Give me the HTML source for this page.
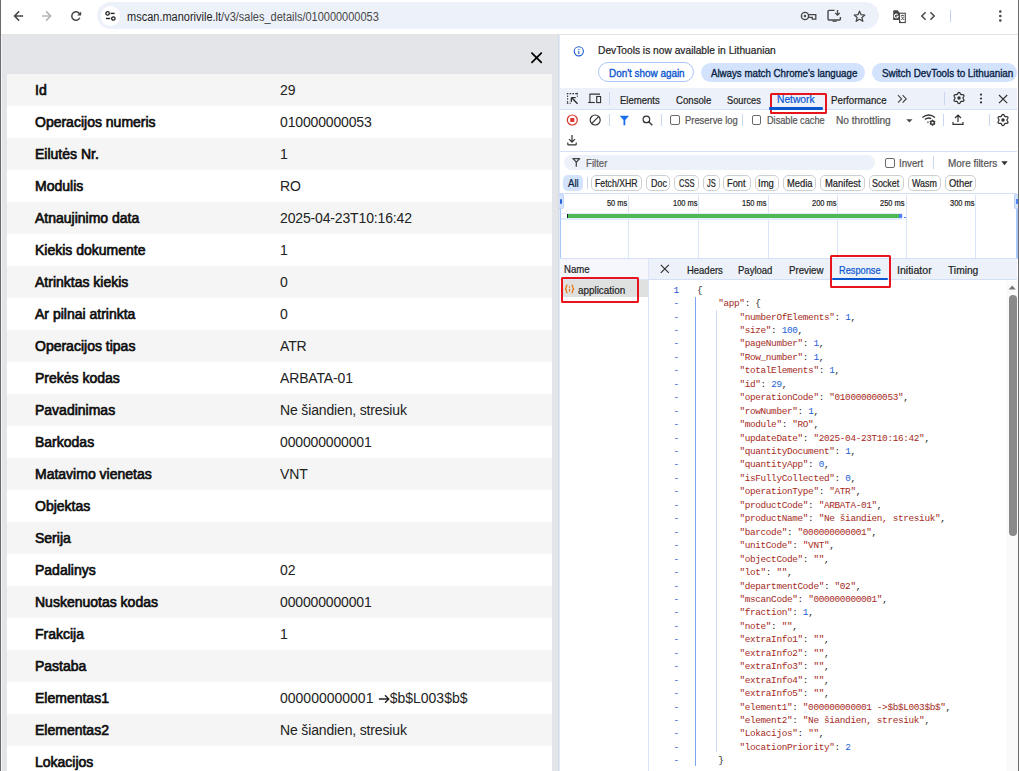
<!DOCTYPE html>
<html><head><meta charset="utf-8"><style>
*{margin:0;padding:0;box-sizing:border-box}
html,body{width:1019px;height:771px;overflow:hidden;background:#fff;font-family:"Liberation Sans",sans-serif;position:relative}
.a{position:absolute}
.t{position:absolute;white-space:nowrap;line-height:1}
.s{position:absolute;overflow:visible}
.row{position:absolute;left:6px;width:545px;height:32px;font-size:14px;color:#1a1a1a}
.row.g{background:#f5f5f5}
.row.w{background:#fff}
.row .k{position:absolute;left:28px;top:8px;font-weight:normal;-webkit-text-stroke:0.65px #0d0d0d;color:#0d0d0d}
.row .v{position:absolute;left:273px;top:8px;color:#222;letter-spacing:-0.15px}
#page{left:1px;top:35px;width:557px;height:736px;background:#e4e5e9;overflow:hidden}
.dt{font-size:10px;color:#1f1f1f}
.chip{position:absolute;height:16px;border:1px solid #cdd0d0;border-radius:5px;font-size:10px;color:#1f1f1f;text-align:center;line-height:14px;white-space:nowrap}
.code{position:absolute;font-family:"Liberation Mono",monospace;font-size:9.4px;letter-spacing:-0.34px;white-space:pre;line-height:13.457px}
.k2{color:#a31515}
.n2{color:#1a1aa6}
</style></head><body>
<div class="a" style="left:1px;top:0px;width:1017px;height:35px;background:#fff;border-bottom:1px solid #e3e3e3"></div>
<div class="a" style="left:97px;top:2.4px;width:782px;height:27.1px;background:#edf2fa;border-radius:14px"></div>
<div class="a" style="left:100.7px;top:6.2px;width:19.4px;height:19.4px;background:#fff;border-radius:50%"></div>
<div class="t" id="f1" style="left:126.7px;top:11.44px;font-size:12px;color:#474747;transform:scaleX(0.9162);transform-origin:0 0;"><span style="color:#1f1f1f">mscan.manorivile.lt</span>/v3/sales_details/010000000053</div>
<svg class="s" style="left:12px;top:9px" width="14" height="14" viewBox="0 0 14 14"><path d="M10.4 7H2.8M6.6 2.9L2.5 7l4.1 4.1" stroke="#474747" stroke-width="1.5" fill="none" stroke-linecap="square"/></svg>
<svg class="s" style="left:41px;top:9px" width="14" height="14" viewBox="0 0 14 14"><path d="M1.8 7h7.6M5.6 2.9L9.7 7l-4.1 4.1" stroke="#b4b4b4" stroke-width="1.5" fill="none" stroke-linecap="square"/></svg>
<svg class="s" style="left:69px;top:9px" width="14" height="14" viewBox="0 0 14 14"><path d="M10.9 5.6A4.2 4.2 0 1 0 10.8 8.8" stroke="#474747" stroke-width="1.5" fill="none"/><path d="M12.2 2.6v4H8.2z" fill="#474747"/></svg>
<svg class="s" style="left:104px;top:10px" width="13" height="12" viewBox="0 0 13 12"><circle cx="3.6" cy="3.4" r="1.7" fill="none" stroke="#1f1f1f" stroke-width="1.3"/><path d="M6.6 3.4h4" stroke="#1f1f1f" stroke-width="1.4"/><circle cx="9.4" cy="8.5" r="1.7" fill="none" stroke="#1f1f1f" stroke-width="1.3"/><path d="M2 8.5h4.2" stroke="#1f1f1f" stroke-width="1.4"/></svg>
<svg class="s" style="left:800px;top:10px" width="18" height="12" viewBox="0 0 18 12"><circle cx="5" cy="6" r="3.6" fill="none" stroke="#474747" stroke-width="1.4"/><circle cx="5" cy="6" r="1.2" fill="#474747"/><path d="M8.6 4.6h7.2v4.6h-3.5V7.4H8.6" fill="none" stroke="#474747" stroke-width="1.3"/></svg>
<svg class="s" style="left:826px;top:9px" width="16" height="14" viewBox="0 0 16 14"><path d="M8.6 1.4H3.2A1.2 1.2 0 0 0 2 2.6v7.2a1.2 1.2 0 0 0 1.2 1.2h10a1.2 1.2 0 0 0 1.2-1.2V8" fill="none" stroke="#474747" stroke-width="1.4"/><path d="M11.5 1v5M9.3 4l2.2 2.2L13.7 4" fill="none" stroke="#474747" stroke-width="1.3"/><path d="M6.5 11.6h4.2v1.2H6.5z" fill="#474747"/></svg>
<svg class="s" style="left:853px;top:9.5px" width="13" height="13" viewBox="0 0 13 13"><path d="M6.5 1.2l1.55 3.5 3.8.35-2.9 2.5.9 3.75L6.5 9.3l-3.3 2L4.1 7.55 1.2 5.05l3.8-.35z" fill="none" stroke="#474747" stroke-width="1.3" stroke-linejoin="round"/></svg>
<svg class="s" style="left:892px;top:8.5px" width="16" height="15" viewBox="0 0 16 15"><path d="M1.2 2.3a1.1 1.1 0 0 1 1.1-1.1H5.8L7.5 3.7V11H1.2z" fill="#474747"/><rect x="7.55" y="4.25" width="5.75" height="9.3" fill="#fff" stroke="#474747" stroke-width="1.1"/><path d="M7.4 10.6L9.6 14.1H7.4z" fill="#474747"/><path d="M5.6 5.6A1.9 1.9 0 1 0 6.2 7.2H4.4" fill="none" stroke="#fff" stroke-width="1.05"/><path d="M9 6.6h3.2M10.6 5.7v0.9M9.3 7.6l2.7 3.4M11.9 7.6L9.3 11" stroke="#474747" stroke-width="0.85" fill="none"/></svg>
<svg class="s" style="left:920px;top:10px" width="16" height="12" viewBox="0 0 16 12"><path d="M5.6 2.2L1.8 6l3.8 3.8M10.4 2.2L14.2 6l-3.8 3.8" fill="none" stroke="#474747" stroke-width="1.5"/></svg>
<div class="a" style="left:950px;top:9.5px;width:1px;height:12.5px;background:#c2d5f7"></div>
<svg class="s" style="left:997px;top:9px" width="7" height="14" viewBox="0 0 7 14"><circle cx="3.3" cy="2.5" r="1.3" fill="#474747"/><circle cx="3.3" cy="7" r="1.3" fill="#474747"/><circle cx="3.3" cy="11.5" r="1.3" fill="#474747"/></svg>
<div class="a" id="page">
<div class="a" id="px" style="left:529px;top:16px;width:14px;height:14px"><svg width="14" height="14" viewBox="0 0 14 14"><path d="M1.95 2.05L11.25 11.35M11.25 2.05L1.95 11.35" stroke="#000" stroke-width="1.75" stroke-linecap="round"/></svg></div>
<div class="row g" style="top:39px"><span class="k">Id</span><span class="v">29</span></div>
<div class="row w" style="top:71px"><span class="k">Operacijos numeris</span><span class="v">010000000053</span></div>
<div class="row g" style="top:103px"><span class="k">Eilutės Nr.</span><span class="v">1</span></div>
<div class="row w" style="top:135px"><span class="k">Modulis</span><span class="v">RO</span></div>
<div class="row g" style="top:167px"><span class="k">Atnaujinimo data</span><span class="v">2025-04-23T10:16:42</span></div>
<div class="row w" style="top:199px"><span class="k">Kiekis dokumente</span><span class="v">1</span></div>
<div class="row g" style="top:231px"><span class="k">Atrinktas kiekis</span><span class="v">0</span></div>
<div class="row w" style="top:263px"><span class="k">Ar pilnai atrinkta</span><span class="v">0</span></div>
<div class="row g" style="top:295px"><span class="k">Operacijos tipas</span><span class="v">ATR</span></div>
<div class="row w" style="top:327px"><span class="k">Prekės kodas</span><span class="v">ARBATA-01</span></div>
<div class="row g" style="top:359px"><span class="k">Pavadinimas</span><span class="v">Ne šiandien, stresiuk</span></div>
<div class="row w" style="top:391px"><span class="k">Barkodas</span><span class="v">000000000001</span></div>
<div class="row g" style="top:423px"><span class="k">Matavimo vienetas</span><span class="v">VNT</span></div>
<div class="row w" style="top:455px"><span class="k">Objektas</span><span class="v"></span></div>
<div class="row g" style="top:487px"><span class="k">Serija</span><span class="v"></span></div>
<div class="row w" style="top:519px"><span class="k">Padalinys</span><span class="v">02</span></div>
<div class="row g" style="top:551px"><span class="k">Nuskenuotas kodas</span><span class="v">000000000001</span></div>
<div class="row w" style="top:583px"><span class="k">Frakcija</span><span class="v">1</span></div>
<div class="row g" style="top:615px"><span class="k">Pastaba</span><span class="v"></span></div>
<div class="row w" style="top:647px"><span class="k">Elementas1</span><span class="v" style="letter-spacing:0">000000000001 <span style="display:inline-block;width:12.3px"></span>$b$L003$b$</span><svg style="position:absolute;left:371.3px;top:11.5px" width="13" height="10" viewBox="0 0 13 10"><path d="M0.9 5h10M7 1.2L10.8 5 7 8.8" fill="none" stroke="#222" stroke-width="1.35"/></svg></div>
<div class="row g" style="top:679px"><span class="k">Elementas2</span><span class="v">Ne šiandien, stresiuk</span></div>
<div class="row w" style="top:711px"><span class="k">Lokacijos</span><span class="v"></span></div>
</div>

<div class="a" style="left:558px;top:35px;width:1px;height:736px;background:#d6dbe6"></div>
<div class="a" style="left:559px;top:35px;width:1px;height:736px;background:#e2e9f8"></div>
<svg class="s" style="left:573px;top:46px" width="12" height="12" viewBox="0 0 12 12"><circle cx="5.8" cy="5.3" r="4.6" fill="none" stroke="#1a5fd6" stroke-width="1.1"/><rect x="5.25" y="5.0" width="1.1" height="3.0" fill="#1a5fd6"/><rect x="5.25" y="2.9" width="1.1" height="1.1" fill="#1a5fd6"/></svg>
<div class="t" id="f2" style="left:598.4px;top:44.69px;font-size:11px;color:#1f1f1f;-webkit-text-stroke:0.22px #1f1f1f;transform:scaleX(0.9289);transform-origin:0 0;">DevTools is now available in Lithuanian</div>
<div class="a" style="left:598px;top:62px;width:96px;height:19.5px;border:1px solid #a8c7fa;border-radius:10px;background:#fff"></div>
<div class="t" id="f3" style="left:608.6px;top:68.87px;font-size:10.2px;color:#0b57d0;-webkit-text-stroke:0.35px #0b57d0;transform:scaleX(0.9712);transform-origin:0 0;">Don&#39;t show again</div>
<div class="a" style="left:700.6px;top:62.5px;width:164.7px;height:19.3px;background:#d3e3fd;border-radius:10px"></div>
<div class="t" id="f4" style="left:711.2px;top:68.87px;font-size:10.2px;color:#0a1f44;-webkit-text-stroke:0.35px #0a1f44;transform:scaleX(0.9518);transform-origin:0 0;">Always match Chrome&#39;s language</div>
<div class="a" style="left:871.5px;top:62.5px;width:145.7px;height:19.3px;background:#d3e3fd;border-radius:10px"></div>
<div class="t" id="f5" style="left:881.7px;top:68.87px;font-size:10.2px;color:#0a1f44;-webkit-text-stroke:0.35px #0a1f44;transform:scaleX(0.9660);transform-origin:0 0;">Switch DevTools to Lithuanian</div>
<div class="a" style="left:560px;top:88px;width:457px;height:21px;background:#edf2fa"></div>
<div class="a" style="left:560px;top:109px;width:457px;height:1px;background:#d3e0f7"></div>
<svg class="s" style="left:566px;top:92px" width="13" height="13" viewBox="0 0 13 13"><path d="M0.8 1.6h1.6M3.6 1.6h1.6M6.4 1.6h1.6M9.2 1.6h1.6M1.6 3.4v1.6M1.6 6.2v1.6M1.6 9v1.6M0.8 11.3h1.6M3.6 11.3h1.2M11.3 0.8v1.6M11.3 3.4v1.4" stroke="#333" stroke-width="1.05" fill="none"/><path d="M5.6 5.8L11.6 11.7" stroke="#333" stroke-width="1.5" fill="none"/><path d="M5.3 5.7h4.4M5.3 5.7v4.4" stroke="#333" stroke-width="1.3" fill="none"/></svg>
<svg class="s" style="left:587px;top:92px" width="15" height="13" viewBox="0 0 15 13"><path d="M2.9 10.5V2.1h10.1" stroke="#333" stroke-width="1.05" fill="none"/><path d="M1.2 10.5h6.6" stroke="#333" stroke-width="1.1"/><rect x="9.7" y="4.5" width="3.9" height="6.1" fill="none" stroke="#333" stroke-width="1.1"/></svg>
<div class="a" style="left:609px;top:92px;width:1px;height:13px;background:#c9d7f0"></div>
<div class="t" id="f6" style="left:619.9px;top:95.78px;font-size:10.3px;color:#1f1f1f;-webkit-text-stroke:0.22px #1f1f1f;transform:scaleX(0.9269);transform-origin:0 0;">Elements</div>
<div class="t" id="f7" style="left:675.6px;top:95.78px;font-size:10.3px;color:#1f1f1f;-webkit-text-stroke:0.22px #1f1f1f;transform:scaleX(0.9343);transform-origin:0 0;">Console</div>
<div class="t" id="f8" style="left:727.0px;top:95.78px;font-size:10.3px;color:#1f1f1f;-webkit-text-stroke:0.22px #1f1f1f;transform:scaleX(0.8946);transform-origin:0 0;">Sources</div>
<div class="t" id="f9" style="left:776.9px;top:95.28px;font-size:10.3px;color:#0b57d0;-webkit-text-stroke:0.22px #0b57d0;transform:scaleX(0.9956);transform-origin:0 0;">Network</div>
<div class="a" style="left:770px;top:92.7px;width:57px;height:21.7px;border:2px solid #e8141c;border-radius:1.5px"></div>
<div class="a" style="left:769.2px;top:107.2px;width:53.8px;height:2.4px;background:#0b57d0;border-radius:1.2px"></div>
<div class="t" id="f10" style="left:831.4px;top:95.78px;font-size:10.3px;color:#1f1f1f;-webkit-text-stroke:0.22px #1f1f1f;transform:scaleX(0.9431);transform-origin:0 0;">Performance</div>
<svg class="s" style="left:896px;top:94px" width="13" height="10" viewBox="0 0 13 10"><path d="M2 1.2l3.6 3.7L2 8.6M6.6 1.2l3.6 3.7-3.6 3.7" stroke="#474747" stroke-width="1.2" fill="none"/></svg>
<div class="a" style="left:944px;top:92px;width:1px;height:13px;background:#c9d7f0"></div>
<svg class="s" style="left:952.9px;top:92.4px" width="12" height="12" viewBox="0 0 12 12"><path d="M9.98 6.00L10.07 5.64L10.30 5.24L10.59 4.77L10.86 4.23L10.97 3.68L10.85 3.20L10.49 2.85L9.96 2.67L9.36 2.64L8.81 2.65L8.34 2.65L7.99 2.55L7.73 2.30L7.49 1.90L7.23 1.41L6.90 0.90L6.48 0.53L6.00 0.40L5.52 0.53L5.10 0.90L4.77 1.41L4.51 1.90L4.27 2.30L4.01 2.55L3.66 2.65L3.19 2.65L2.64 2.64L2.04 2.67L1.51 2.85L1.15 3.20L1.03 3.68L1.14 4.23L1.41 4.77L1.70 5.24L1.93 5.64L2.02 6.00L1.93 6.36L1.70 6.76L1.41 7.23L1.14 7.77L1.03 8.32L1.15 8.80L1.51 9.15L2.04 9.33L2.64 9.36L3.19 9.35L3.66 9.35L4.01 9.45L4.27 9.70L4.51 10.10L4.77 10.59L5.10 11.10L5.52 11.47L6.00 11.60L6.48 11.47L6.90 11.10L7.23 10.59L7.49 10.10L7.73 9.70L7.99 9.45L8.34 9.35L8.81 9.35L9.36 9.36L9.96 9.33L10.49 9.15L10.85 8.80L10.97 8.32L10.86 7.77L10.59 7.23L10.30 6.76L10.07 6.36z" fill="none" stroke="#333" stroke-width="1.25" stroke-linejoin="round"/><circle cx="6" cy="6" r="1.75" fill="#333"/></svg>
<svg class="s" style="left:979px;top:93px" width="4" height="12" viewBox="0 0 4 12"><circle cx="2" cy="1.6" r="1.1" fill="#333"/><circle cx="2" cy="5.5" r="1.1" fill="#333"/><circle cx="2" cy="9.4" r="1.1" fill="#333"/></svg>
<svg class="s" style="left:998px;top:93.5px" width="10" height="10" viewBox="0 0 10 10"><path d="M1 1l8.2 8.2M9.2 1L1 9.2" stroke="#333" stroke-width="1.2"/></svg>
<svg class="s" style="left:566px;top:114px" width="13" height="13" viewBox="0 0 13 13"><circle cx="6.3" cy="6" r="5" fill="none" stroke="#dc362e" stroke-width="1.2"/><rect x="4.3" y="4" width="4" height="4" fill="#dc362e"/></svg>
<svg class="s" style="left:588.5px;top:114px" width="13" height="13" viewBox="0 0 13 13"><circle cx="6.2" cy="6" r="5" fill="none" stroke="#333" stroke-width="1.2"/><path d="M9.6 2.6L2.8 9.4" stroke="#333" stroke-width="1.2"/></svg>
<div class="a" style="left:609px;top:114px;width:1px;height:12px;background:#c9d7f0"></div>
<svg class="s" style="left:619px;top:114.5px" width="11" height="11" viewBox="0 0 11 11"><path d="M0.7 0.8h9.4L6.3 4.9v5.3H4.5V4.9z" fill="#1a6ff0"/></svg>
<svg class="s" style="left:642px;top:115px" width="12" height="12" viewBox="0 0 12 12"><circle cx="4.4" cy="4.4" r="3.3" fill="none" stroke="#333" stroke-width="1.2"/><path d="M6.8 6.8L10.3 10.3" stroke="#333" stroke-width="1.3"/></svg>
<div class="a" style="left:661px;top:114px;width:1px;height:12px;background:#c9d7f0"></div>
<div class="a" style="left:670px;top:115px;width:10px;height:10px;border:1px solid #6a6a6a;border-radius:2px"></div>
<div class="t" id="f11" style="left:684.7px;top:116.48px;font-size:10.3px;color:#555555;-webkit-text-stroke:0.22px #555555;transform:scaleX(0.9116);transform-origin:0 0;">Preserve log</div>
<div class="a" style="left:742px;top:114px;width:1px;height:12px;background:#c9d7f0"></div>
<div class="a" style="left:752px;top:115px;width:9px;height:10px;border:1px solid #6a6a6a;border-radius:2px"></div>
<div class="t" id="f12" style="left:767.4px;top:116.48px;font-size:10.3px;color:#555555;-webkit-text-stroke:0.22px #555555;transform:scaleX(0.8904);transform-origin:0 0;">Disable cache</div>
<div class="t" id="f13" style="left:835.7px;top:116.48px;font-size:10.3px;color:#555555;-webkit-text-stroke:0.22px #555555;transform:scaleX(0.9850);transform-origin:0 0;">No throttling</div>
<svg class="s" style="left:906px;top:118.5px" width="7" height="4" viewBox="0 0 7 4"><path d="M0.3 0.3h6.2L3.4 3.6z" fill="#474747"/></svg>
<svg class="s" style="left:921px;top:114px" width="16" height="12" viewBox="0 0 16 12"><path d="M1.4 3.5Q7.7 -1.4 14 3.5" stroke="#333" stroke-width="1.35" fill="none"/><path d="M3.9 5.6Q6.8 3.1 10.2 4.6" stroke="#333" stroke-width="1.35" fill="none"/><rect x="6.3" y="7.6" width="1.3" height="1.3" fill="#333"/><path d="M12.95 8.70L13.10 8.49L13.43 8.18L13.71 7.79L13.71 7.42L13.40 7.25L12.91 7.29L12.48 7.42L12.22 7.44L12.12 7.21L12.02 6.77L11.81 6.33L11.50 6.15L11.19 6.33L10.98 6.77L10.88 7.21L10.78 7.44L10.52 7.42L10.09 7.29L9.60 7.25L9.29 7.42L9.29 7.79L9.57 8.18L9.90 8.49L10.05 8.70L9.90 8.91L9.57 9.22L9.29 9.61L9.29 9.97L9.60 10.15L10.09 10.11L10.52 9.98L10.77 9.96L10.88 10.19L10.98 10.63L11.19 11.07L11.50 11.25L11.81 11.07L12.02 10.63L12.12 10.19L12.22 9.96L12.48 9.98L12.91 10.11L13.40 10.15L13.71 9.97L13.71 9.61L13.43 9.22L13.10 8.91z" fill="none" stroke="#333" stroke-width="1.15"/></svg>
<div class="a" style="left:943px;top:114px;width:1px;height:12px;background:#c9d7f0"></div>
<svg class="s" style="left:952px;top:114px" width="12" height="12" viewBox="0 0 12 12"><path d="M6 8V1.2M3 4l3-3 3 3M1 8v2.3h10V8" stroke="#333" stroke-width="1.2" fill="none"/></svg>
<div class="a" style="left:988.5px;top:114px;width:1px;height:12px;background:#c9d7f0"></div>
<svg class="s" style="left:996.8px;top:114px" width="12" height="12" viewBox="0 0 12 12"><path d="M9.98 6.00L10.07 5.64L10.30 5.24L10.59 4.77L10.86 4.23L10.97 3.68L10.85 3.20L10.49 2.85L9.96 2.67L9.36 2.64L8.81 2.65L8.34 2.65L7.99 2.55L7.73 2.30L7.49 1.90L7.23 1.41L6.90 0.90L6.48 0.53L6.00 0.40L5.52 0.53L5.10 0.90L4.77 1.41L4.51 1.90L4.27 2.30L4.01 2.55L3.66 2.65L3.19 2.65L2.64 2.64L2.04 2.67L1.51 2.85L1.15 3.20L1.03 3.68L1.14 4.23L1.41 4.77L1.70 5.24L1.93 5.64L2.02 6.00L1.93 6.36L1.70 6.76L1.41 7.23L1.14 7.77L1.03 8.32L1.15 8.80L1.51 9.15L2.04 9.33L2.64 9.36L3.19 9.35L3.66 9.35L4.01 9.45L4.27 9.70L4.51 10.10L4.77 10.59L5.10 11.10L5.52 11.47L6.00 11.60L6.48 11.47L6.90 11.10L7.23 10.59L7.49 10.10L7.73 9.70L7.99 9.45L8.34 9.35L8.81 9.35L9.36 9.36L9.96 9.33L10.49 9.15L10.85 8.80L10.97 8.32L10.86 7.77L10.59 7.23L10.30 6.76L10.07 6.36z" fill="none" stroke="#333" stroke-width="1.25" stroke-linejoin="round"/><circle cx="6" cy="6" r="1.75" fill="#333"/></svg>
<svg class="s" style="left:566px;top:134px" width="12" height="12" viewBox="0 0 12 12"><path d="M6 1v7.2M3 5.2l3 3 3-3M1.8 8.6v1.6c0 .4.3.7.7.7h7c.4 0 .7-.3.7-.7V8.6" stroke="#333" stroke-width="1.2" fill="none"/></svg>
<div class="a" style="left:560px;top:150.5px;width:457px;height:1px;background:#d3e0f7"></div>
<div class="a" style="left:564px;top:155px;width:311px;height:15px;background:#edf2fa;border-radius:8px"></div>
<svg class="s" style="left:571px;top:156px" width="11" height="12" viewBox="0 0 11 12"><path d="M1.9 2.5H8.7L5.3 6.1z" fill="none" stroke="#454545" stroke-width="1.25" stroke-linejoin="round"/><path d="M5.3 5.8V10.2" stroke="#454545" stroke-width="1.3" stroke-linecap="round"/></svg>
<div class="t" id="f14" style="left:586.2px;top:159.28px;font-size:10.3px;color:#5e5e5e;-webkit-text-stroke:0.22px #5e5e5e;transform:scaleX(0.9349);transform-origin:0 0;">Filter</div>
<div class="a" style="left:884.5px;top:157.5px;width:10px;height:10px;border:1px solid #6a6a6a;border-radius:2px"></div>
<div class="t" id="f15" style="left:899.4px;top:159.28px;font-size:10.3px;color:#555555;-webkit-text-stroke:0.22px #555555;transform:scaleX(0.9431);transform-origin:0 0;">Invert</div>
<div class="a" style="left:933px;top:156px;width:1px;height:13px;background:#c9d7f0"></div>
<div class="t" id="f16" style="left:947.5px;top:159.28px;font-size:10.3px;color:#555555;-webkit-text-stroke:0.22px #555555;transform:scaleX(0.9662);transform-origin:0 0;">More filters</div>
<svg class="s" style="left:1001px;top:160.5px" width="7" height="5" viewBox="0 0 7 5"><path d="M0.3 0.3h6.4L3.5 4.3z" fill="#333"/></svg>
<div class="a" style="left:563px;top:175px;width:20px;height:16px;background:#d3e3fd;border-radius:5px"></div>
<div class="t" id="f17" style="left:568.0px;top:179.37px;font-size:10.2px;color:#0a1f44;-webkit-text-stroke:0.22px #0a1f44;transform:scaleX(0.9446);transform-origin:0 0;">All</div>
<div class="a" style="left:587px;top:177px;width:1px;height:12px;background:#c9d7f0"></div>
<div class="chip" style="left:590.5px;top:174.7px;width:51.0px;height:16.3px"></div>
<div class="t" id="f18" style="left:595.2px;top:179.37px;font-size:10.2px;color:#1f1f1f;-webkit-text-stroke:0.22px #1f1f1f;transform:scaleX(0.8549);transform-origin:0 0;">Fetch/XHR</div>
<div class="chip" style="left:645.5px;top:174.7px;width:24.5px;height:16.3px"></div>
<div class="t" id="f19" style="left:650.5px;top:179.37px;font-size:10.2px;color:#1f1f1f;-webkit-text-stroke:0.22px #1f1f1f;transform:scaleX(0.8772);transform-origin:0 0;">Doc</div>
<div class="chip" style="left:674px;top:174.7px;width:24.5px;height:16.3px"></div>
<div class="t" id="f20" style="left:678.6px;top:179.37px;font-size:10.2px;color:#1f1f1f;-webkit-text-stroke:0.22px #1f1f1f;transform:scaleX(0.7397);transform-origin:0 0;">CSS</div>
<div class="chip" style="left:702.5px;top:174.7px;width:17.0px;height:16.3px"></div>
<div class="t" id="f21" style="left:706.5px;top:179.37px;font-size:10.2px;color:#1f1f1f;-webkit-text-stroke:0.22px #1f1f1f;transform:scaleX(0.7317);transform-origin:0 0;">JS</div>
<div class="chip" style="left:723px;top:174.7px;width:28px;height:16.3px"></div>
<div class="t" id="f22" style="left:727.3px;top:179.37px;font-size:10.2px;color:#1f1f1f;-webkit-text-stroke:0.22px #1f1f1f;transform:scaleX(0.9122);transform-origin:0 0;">Font</div>
<div class="chip" style="left:754.5px;top:174.7px;width:24.0px;height:16.3px"></div>
<div class="t" id="f23" style="left:758.4px;top:179.37px;font-size:10.2px;color:#1f1f1f;-webkit-text-stroke:0.22px #1f1f1f;transform:scaleX(0.9362);transform-origin:0 0;">Img</div>
<div class="chip" style="left:782.5px;top:174.7px;width:33.5px;height:16.3px"></div>
<div class="t" id="f24" style="left:786.9px;top:179.37px;font-size:10.2px;color:#1f1f1f;-webkit-text-stroke:0.22px #1f1f1f;transform:scaleX(0.9153);transform-origin:0 0;">Media</div>
<div class="chip" style="left:820px;top:174.7px;width:44.5px;height:16.3px"></div>
<div class="t" id="f25" style="left:824.7px;top:179.37px;font-size:10.2px;color:#1f1f1f;-webkit-text-stroke:0.22px #1f1f1f;transform:scaleX(0.9243);transform-origin:0 0;">Manifest</div>
<div class="chip" style="left:868.5px;top:174.7px;width:35.0px;height:16.3px"></div>
<div class="t" id="f26" style="left:872.3px;top:179.37px;font-size:10.2px;color:#1f1f1f;-webkit-text-stroke:0.22px #1f1f1f;transform:scaleX(0.8698);transform-origin:0 0;">Socket</div>
<div class="chip" style="left:907.5px;top:174.7px;width:33.5px;height:16.3px"></div>
<div class="t" id="f27" style="left:911.8px;top:179.37px;font-size:10.2px;color:#1f1f1f;-webkit-text-stroke:0.22px #1f1f1f;transform:scaleX(0.8742);transform-origin:0 0;">Wasm</div>
<div class="chip" style="left:945px;top:174.7px;width:31px;height:16.3px"></div>
<div class="t" id="f28" style="left:948.5px;top:179.37px;font-size:10.2px;color:#1f1f1f;-webkit-text-stroke:0.22px #1f1f1f;transform:scaleX(0.9221);transform-origin:0 0;">Other</div>
<div class="a" style="left:560px;top:193px;width:457px;height:1px;background:#d3e0f7"></div>
<div class="a" style="left:628.4px;top:194.5px;width:1px;height:63px;background:#dbe5f8"></div>
<div class="a" style="left:698.3px;top:194.5px;width:1px;height:63px;background:#dbe5f8"></div>
<div class="a" style="left:767.7px;top:194.5px;width:1px;height:63px;background:#dbe5f8"></div>
<div class="a" style="left:836.8px;top:194.5px;width:1px;height:63px;background:#dbe5f8"></div>
<div class="a" style="left:905.5px;top:194.5px;width:1px;height:63px;background:#dbe5f8"></div>
<div class="a" style="left:975.3px;top:194.5px;width:1px;height:63px;background:#dbe5f8"></div>
<div class="t" id="f29" style="left:607.3px;top:198.69px;font-size:8.4px;color:#1f1f1f;-webkit-text-stroke:0.22px #1f1f1f;transform:scaleX(0.8855);transform-origin:0 0;">50 ms</div>
<div class="t" id="f30" style="left:673.0px;top:198.69px;font-size:8.4px;color:#1f1f1f;-webkit-text-stroke:0.22px #1f1f1f;transform:scaleX(0.8883);transform-origin:0 0;">100 ms</div>
<div class="t" id="f31" style="left:742.4px;top:198.69px;font-size:8.4px;color:#1f1f1f;-webkit-text-stroke:0.22px #1f1f1f;transform:scaleX(0.8883);transform-origin:0 0;">150 ms</div>
<div class="t" id="f32" style="left:811.5px;top:198.69px;font-size:8.4px;color:#1f1f1f;-webkit-text-stroke:0.22px #1f1f1f;transform:scaleX(0.8883);transform-origin:0 0;">200 ms</div>
<div class="t" id="f33" style="left:880.2px;top:198.69px;font-size:8.4px;color:#1f1f1f;-webkit-text-stroke:0.22px #1f1f1f;transform:scaleX(0.8883);transform-origin:0 0;">250 ms</div>
<div class="t" id="f34" style="left:950.0px;top:198.69px;font-size:8.4px;color:#1f1f1f;-webkit-text-stroke:0.22px #1f1f1f;transform:scaleX(0.8883);transform-origin:0 0;">300 ms</div>
<div class="a" style="left:561px;top:212.5px;width:342px;height:7.5px;background:#e3ecfd;border-radius:1px"></div>
<div class="a" style="left:561px;top:214px;width:6px;height:4px;background:#fff"></div>
<div class="a" style="left:567px;top:214px;width:332px;height:4.1px;background:#4cb856"></div>
<div class="a" style="left:567px;top:214px;width:1.4px;height:4.1px;background:#10232c"></div>
<div class="a" style="left:899px;top:214px;width:2.9px;height:4.1px;background:#4f82f2"></div>
<div class="a" style="left:903.5px;top:216.5px;width:2.5px;height:1.5px;background:#4f82f2"></div>
<div class="a" style="left:559.5px;top:193.5px;width:1.6px;height:65px;background:#a8c7fa"></div>
<div class="a" style="left:559px;top:194px;width:4.5px;height:14.5px;background:#d3e3fd;border-radius:0 2px 2px 0;border:1px solid #bcd4fb;border-left:none"></div>
<div class="a" style="left:560.2px;top:198.5px;width:1.4px;height:5.5px;background:#2a63d8;border-radius:1px"></div>
<div class="a" style="left:1016.3px;top:193.5px;width:1.4px;height:65px;background:#a8c7fa"></div>
<div class="a" style="left:1014px;top:194px;width:4px;height:14.5px;background:#d3e3fd;border-radius:2px 0 0 2px;border:1px solid #bcd4fb;border-right:none"></div>
<div class="a" style="left:1016.2px;top:199px;width:1.4px;height:5px;background:#4f82f2"></div>
<div class="a" style="left:560px;top:257.5px;width:457px;height:1px;background:#d3e0f7"></div>
<div class="a" style="left:560px;top:258.5px;width:88px;height:512.5px;background:#fff"></div>
<div class="a" style="left:560px;top:258.5px;width:88px;height:20.5px;background:#f5f7fd"></div>
<div class="a" style="left:560px;top:279px;width:88px;height:1px;background:#dde6f7"></div>
<div class="t" id="f35" style="left:563.9px;top:265.47px;font-size:10.2px;color:#1f1f1f;-webkit-text-stroke:0.22px #1f1f1f;transform:scaleX(0.9416);transform-origin:0 0;">Name</div>
<div class="a" style="left:563px;top:280px;width:85px;height:16.7px;background:#dfe1e1"></div>
<svg class="s" style="left:563.5px;top:284px" width="12" height="10" viewBox="0 0 12 10"><path d="M3.6 0.9C2.3 0.9 2.3 1.6 2.3 2.8S2.1 4.6 1 4.8C2.1 5 2.3 5.6 2.3 6.8S2.3 8.7 3.6 8.7M7.4 0.9C8.7 0.9 8.7 1.6 8.7 2.8S8.9 4.6 10 4.8C8.9 5 8.7 5.6 8.7 6.8S8.7 8.7 7.4 8.7" fill="none" stroke="#e8710a" stroke-width="1.2"/><circle cx="5.5" cy="3" r="0.75" fill="#e8710a"/><path d="M5.5 4.9v2.6" stroke="#e8710a" stroke-width="1.2"/></svg>
<div class="t" id="f36" style="left:578.2px;top:285.77px;font-size:10.2px;color:#1f1f1f;-webkit-text-stroke:0.22px #1f1f1f;transform:scaleX(0.9688);transform-origin:0 0;">application</div>
<div class="a" style="left:561px;top:277px;width:78px;height:25.5px;border:2px solid #e8141c;border-radius:1.5px"></div>
<div class="a" style="left:648px;top:258.5px;width:1px;height:512.5px;background:#dbe5f7"></div>
<div class="a" style="left:649px;top:258.5px;width:368px;height:20.5px;background:#edf2fa"></div>
<div class="a" style="left:649px;top:279px;width:368px;height:1px;background:#d3e0f7"></div>
<svg class="s" style="left:660px;top:264px" width="10" height="10" viewBox="0 0 10 10"><path d="M0.8 0.8l8 8M8.8 0.8l-8 8" stroke="#333" stroke-width="1.2"/></svg>
<div class="t" id="f37" style="left:686.7px;top:266.38px;font-size:10.3px;color:#1f1f1f;-webkit-text-stroke:0.22px #1f1f1f;transform:scaleX(0.9198);transform-origin:0 0;">Headers</div>
<div class="t" id="f38" style="left:738.4px;top:266.38px;font-size:10.3px;color:#1f1f1f;-webkit-text-stroke:0.22px #1f1f1f;transform:scaleX(0.9243);transform-origin:0 0;">Payload</div>
<div class="t" id="f39" style="left:788.8px;top:266.38px;font-size:10.3px;color:#1f1f1f;-webkit-text-stroke:0.22px #1f1f1f;transform:scaleX(0.9392);transform-origin:0 0;">Preview</div>
<div class="t" id="f40" style="left:839.3px;top:266.38px;font-size:10.3px;color:#0b57d0;-webkit-text-stroke:0.22px #0b57d0;transform:scaleX(0.8970);transform-origin:0 0;">Response</div>
<div class="t" id="f41" style="left:896.9px;top:266.38px;font-size:10.3px;color:#1f1f1f;-webkit-text-stroke:0.22px #1f1f1f;transform:scaleX(1.0272);transform-origin:0 0;">Initiator</div>
<div class="t" id="f42" style="left:948.1px;top:266.38px;font-size:10.3px;color:#1f1f1f;-webkit-text-stroke:0.22px #1f1f1f;transform:scaleX(0.9929);transform-origin:0 0;">Timing</div>
<div class="a" style="left:832px;top:278px;width:56px;height:2px;background:#0b57d0;border-radius:1px"></div>
<div class="a" style="left:830px;top:254.6px;width:61px;height:33px;border:2px solid #e8141c;border-radius:1.5px"></div>
<div class="a" style="left:1006px;top:280.5px;width:12px;height:490.5px;background:#fafafa"></div>
<svg class="s" style="left:1008px;top:284.5px" width="9" height="5" viewBox="0 0 9 5"><path d="M0.6 4.6L4.2 0.6 7.8 4.6z" fill="#777"/></svg>
<div class="a" style="left:1008.5px;top:294.5px;width:8px;height:241px;background:#8a8a8a;border-radius:4px"></div>
<div class="code" style="left:697.00px;top:283.60px;color:#1f1f1f">{</div>
<div class="code" style="left:673.50px;top:283.60px;color:#1f4fd0">1</div>
<div class="code" style="left:718.20px;top:297.05px;color:#1f1f1f"><span style="color:#a52a22">"app"</span>: {</div>
<div class="code" style="left:673.50px;top:297.05px;color:#1f4fd0">-</div>
<div class="code" style="left:739.40px;top:310.50px;color:#1f1f1f"><span style="color:#a52a22">"numberOfElements"</span>: <span style="color:#1a5fd6">1</span>,</div>
<div class="code" style="left:673.50px;top:310.50px;color:#1f4fd0">-</div>
<div class="code" style="left:739.40px;top:323.95px;color:#1f1f1f"><span style="color:#a52a22">"size"</span>: <span style="color:#1a5fd6">100</span>,</div>
<div class="code" style="left:673.50px;top:323.95px;color:#1f4fd0">-</div>
<div class="code" style="left:739.40px;top:337.40px;color:#1f1f1f"><span style="color:#a52a22">"pageNumber"</span>: <span style="color:#1a5fd6">1</span>,</div>
<div class="code" style="left:673.50px;top:337.40px;color:#1f4fd0">-</div>
<div class="code" style="left:739.40px;top:350.85px;color:#1f1f1f"><span style="color:#a52a22">"Row_number"</span>: <span style="color:#1a5fd6">1</span>,</div>
<div class="code" style="left:673.50px;top:350.85px;color:#1f4fd0">-</div>
<div class="code" style="left:739.40px;top:364.30px;color:#1f1f1f"><span style="color:#a52a22">"totalElements"</span>: <span style="color:#1a5fd6">1</span>,</div>
<div class="code" style="left:673.50px;top:364.30px;color:#1f4fd0">-</div>
<div class="code" style="left:739.40px;top:377.75px;color:#1f1f1f"><span style="color:#a52a22">"id"</span>: <span style="color:#1a5fd6">29</span>,</div>
<div class="code" style="left:673.50px;top:377.75px;color:#1f4fd0">-</div>
<div class="code" style="left:739.40px;top:391.20px;color:#1f1f1f"><span style="color:#a52a22">"operationCode"</span>: <span style="color:#a52a22">"010000000053"</span>,</div>
<div class="code" style="left:673.50px;top:391.20px;color:#1f4fd0">-</div>
<div class="code" style="left:739.40px;top:404.65px;color:#1f1f1f"><span style="color:#a52a22">"rowNumber"</span>: <span style="color:#1a5fd6">1</span>,</div>
<div class="code" style="left:673.50px;top:404.65px;color:#1f4fd0">-</div>
<div class="code" style="left:739.40px;top:418.10px;color:#1f1f1f"><span style="color:#a52a22">"module"</span>: <span style="color:#a52a22">"RO"</span>,</div>
<div class="code" style="left:673.50px;top:418.10px;color:#1f4fd0">-</div>
<div class="code" style="left:739.40px;top:431.55px;color:#1f1f1f"><span style="color:#a52a22">"updateDate"</span>: <span style="color:#a52a22">"2025-04-23T10:16:42"</span>,</div>
<div class="code" style="left:673.50px;top:431.55px;color:#1f4fd0">-</div>
<div class="code" style="left:739.40px;top:445.00px;color:#1f1f1f"><span style="color:#a52a22">"quantityDocument"</span>: <span style="color:#1a5fd6">1</span>,</div>
<div class="code" style="left:673.50px;top:445.00px;color:#1f4fd0">-</div>
<div class="code" style="left:739.40px;top:458.45px;color:#1f1f1f"><span style="color:#a52a22">"quantityApp"</span>: <span style="color:#1a5fd6">0</span>,</div>
<div class="code" style="left:673.50px;top:458.45px;color:#1f4fd0">-</div>
<div class="code" style="left:739.40px;top:471.90px;color:#1f1f1f"><span style="color:#a52a22">"isFullyCollected"</span>: <span style="color:#1a5fd6">0</span>,</div>
<div class="code" style="left:673.50px;top:471.90px;color:#1f4fd0">-</div>
<div class="code" style="left:739.40px;top:485.35px;color:#1f1f1f"><span style="color:#a52a22">"operationType"</span>: <span style="color:#a52a22">"ATR"</span>,</div>
<div class="code" style="left:673.50px;top:485.35px;color:#1f4fd0">-</div>
<div class="code" style="left:739.40px;top:498.80px;color:#1f1f1f"><span style="color:#a52a22">"productCode"</span>: <span style="color:#a52a22">"ARBATA-01"</span>,</div>
<div class="code" style="left:673.50px;top:498.80px;color:#1f4fd0">-</div>
<div class="code" style="left:739.40px;top:512.25px;color:#1f1f1f"><span style="color:#a52a22">"productName"</span>: <span style="color:#a52a22">"Ne šiandien, stresiuk"</span>,</div>
<div class="code" style="left:673.50px;top:512.25px;color:#1f4fd0">-</div>
<div class="code" style="left:739.40px;top:525.70px;color:#1f1f1f"><span style="color:#a52a22">"barcode"</span>: <span style="color:#a52a22">"000000000001"</span>,</div>
<div class="code" style="left:673.50px;top:525.70px;color:#1f4fd0">-</div>
<div class="code" style="left:739.40px;top:539.15px;color:#1f1f1f"><span style="color:#a52a22">"unitCode"</span>: <span style="color:#a52a22">"VNT"</span>,</div>
<div class="code" style="left:673.50px;top:539.15px;color:#1f4fd0">-</div>
<div class="code" style="left:739.40px;top:552.60px;color:#1f1f1f"><span style="color:#a52a22">"objectCode"</span>: <span style="color:#a52a22">""</span>,</div>
<div class="code" style="left:673.50px;top:552.60px;color:#1f4fd0">-</div>
<div class="code" style="left:739.40px;top:566.05px;color:#1f1f1f"><span style="color:#a52a22">"lot"</span>: <span style="color:#a52a22">""</span>,</div>
<div class="code" style="left:673.50px;top:566.05px;color:#1f4fd0">-</div>
<div class="code" style="left:739.40px;top:579.50px;color:#1f1f1f"><span style="color:#a52a22">"departmentCode"</span>: <span style="color:#a52a22">"02"</span>,</div>
<div class="code" style="left:673.50px;top:579.50px;color:#1f4fd0">-</div>
<div class="code" style="left:739.40px;top:592.95px;color:#1f1f1f"><span style="color:#a52a22">"mscanCode"</span>: <span style="color:#a52a22">"000000000001"</span>,</div>
<div class="code" style="left:673.50px;top:592.95px;color:#1f4fd0">-</div>
<div class="code" style="left:739.40px;top:606.40px;color:#1f1f1f"><span style="color:#a52a22">"fraction"</span>: <span style="color:#1a5fd6">1</span>,</div>
<div class="code" style="left:673.50px;top:606.40px;color:#1f4fd0">-</div>
<div class="code" style="left:739.40px;top:619.85px;color:#1f1f1f"><span style="color:#a52a22">"note"</span>: <span style="color:#a52a22">""</span>,</div>
<div class="code" style="left:673.50px;top:619.85px;color:#1f4fd0">-</div>
<div class="code" style="left:739.40px;top:633.30px;color:#1f1f1f"><span style="color:#a52a22">"extraInfo1"</span>: <span style="color:#a52a22">""</span>,</div>
<div class="code" style="left:673.50px;top:633.30px;color:#1f4fd0">-</div>
<div class="code" style="left:739.40px;top:646.75px;color:#1f1f1f"><span style="color:#a52a22">"extraInfo2"</span>: <span style="color:#a52a22">""</span>,</div>
<div class="code" style="left:673.50px;top:646.75px;color:#1f4fd0">-</div>
<div class="code" style="left:739.40px;top:660.20px;color:#1f1f1f"><span style="color:#a52a22">"extraInfo3"</span>: <span style="color:#a52a22">""</span>,</div>
<div class="code" style="left:673.50px;top:660.20px;color:#1f4fd0">-</div>
<div class="code" style="left:739.40px;top:673.65px;color:#1f1f1f"><span style="color:#a52a22">"extraInfo4"</span>: <span style="color:#a52a22">""</span>,</div>
<div class="code" style="left:673.50px;top:673.65px;color:#1f4fd0">-</div>
<div class="code" style="left:739.40px;top:687.10px;color:#1f1f1f"><span style="color:#a52a22">"extraInfo5"</span>: <span style="color:#a52a22">""</span>,</div>
<div class="code" style="left:673.50px;top:687.10px;color:#1f4fd0">-</div>
<div class="code" style="left:739.40px;top:700.55px;color:#1f1f1f"><span style="color:#a52a22">"element1"</span>: <span style="color:#a52a22">"000000000001 -&gt;$b$L003$b$"</span>,</div>
<div class="code" style="left:673.50px;top:700.55px;color:#1f4fd0">-</div>
<div class="code" style="left:739.40px;top:714.00px;color:#1f1f1f"><span style="color:#a52a22">"element2"</span>: <span style="color:#a52a22">"Ne šiandien, stresiuk"</span>,</div>
<div class="code" style="left:673.50px;top:714.00px;color:#1f4fd0">-</div>
<div class="code" style="left:739.40px;top:727.45px;color:#1f1f1f"><span style="color:#a52a22">"Lokacijos"</span>: <span style="color:#a52a22">""</span>,</div>
<div class="code" style="left:673.50px;top:727.45px;color:#1f4fd0">-</div>
<div class="code" style="left:739.40px;top:740.90px;color:#1f1f1f"><span style="color:#a52a22">"locationPriority"</span>: <span style="color:#1a5fd6">2</span></div>
<div class="code" style="left:673.50px;top:740.90px;color:#1f4fd0">-</div>
<div class="code" style="left:718.20px;top:754.35px;color:#1f1f1f">}</div>
<div class="code" style="left:673.50px;top:754.35px;color:#1f4fd0">-</div>
<div class="a" style="left:695px;top:296.5px;width:1px;height:469px;background:#7aa5f0"></div>
<div class="a" style="left:716.3px;top:310px;width:1px;height:442px;background:#cddcf7"></div>
<div class="a" style="left:1px;top:35px;width:1px;height:736px;background:#f3f5fa"></div>
<div class="a" style="left:0px;top:0px;width:1px;height:771px;background:#6b6b6b"></div>
<div class="a" style="left:1018px;top:0px;width:1px;height:771px;background:#6b6b6b"></div>
</body></html>
